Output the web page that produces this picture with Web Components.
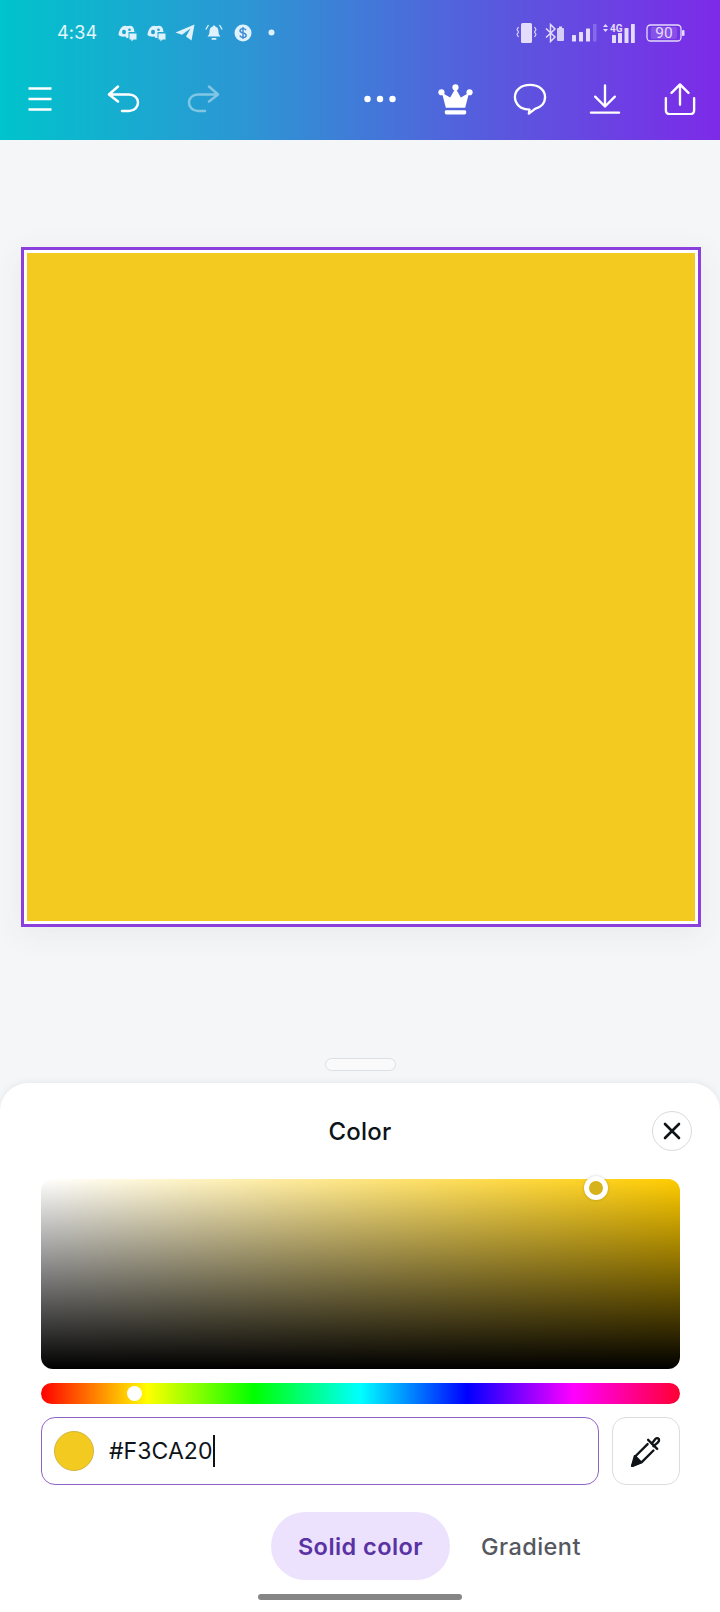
<!DOCTYPE html>
<html>
<head>
<meta charset="utf-8">
<title>Color</title>
<style>
  html, body { margin: 0; padding: 0; background: #f5f6f8; }
  body { width: 720px; height: 1612px; overflow: hidden; font-family: Inter, "Liberation Sans", sans-serif; }
</style>
</head>
<body>
  <app-header>
    <status-bar></status-bar>
    <editor-toolbar></editor-toolbar>
  </app-header>
  <design-workspace color="#f3ca1f"></design-workspace>
  <color-sheet title="Color">
    <sv-picker></sv-picker>
    <hue-slider></hue-slider>
    <hex-field value="#F3CA20"></hex-field>
    <tab-switch></tab-switch>
  </color-sheet>

<script>
class AppHeader extends HTMLElement {
  constructor() {
    super();
    this.attachShadow({ mode: 'open' });
    this.shadowRoot.innerHTML = `
      <style>
        :host {
          display: block;
          height: 140px;
          background: linear-gradient(90deg, #00c4cc 0%, #2f93d4 36%, #5a57de 70%, #7d2ae8 100%);
        }
      </style>
      <slot></slot>
    `;
  }
}

// Chat-game notification glyph, used twice in the status bar
const chatGlyph = (eye, style = '') => `
  <svg style="${style}" width="19" height="18" viewBox="0 0 19 18" fill="currentColor">
    <path d="M4.500 2.500c1.500-.8 2.500-1 3.500-.5h3c1-.5 2-.3 3.500.5 1 1 1.700 2.800 2 5.500H10.500v6H8.500l-1-1.500C4.500 13 2 12.300.5 11 .5 8 2 4.500 4.500 2.500z"/>
    <ellipse cx="6" cy="8" rx="2" ry="2.200" fill="${eye}"/>
    <circle cx="11.500" cy="5.800" r="1.300" fill="${eye}"/>
    <path d="M11.500 9.500h7v6h-3L13.500 17.500v-2h-2z"/>
  </svg>`;

class StatusBar extends HTMLElement {
  constructor() {
    super();
    this.attachShadow({ mode: 'open' });
    this.shadowRoot.innerHTML = `
      <style>
        :host {
          display: flex;
          align-items: center;
          height: 55px;
          padding: 10px 0 0 57px;
          box-sizing: border-box;
          color: #e6f4fb;
        }
        svg { display: block; flex: none; }
        .time { font-size: 18px; font-weight: 400; width: 61px; letter-spacing: .2px; color: #e4f6fb; }
        .left { display: flex; align-items: center; color: #dff1fb; }
        .right { display: flex; align-items: center; margin-left: 241px; color: #e4dcfb; }
        text { font-family: Roboto, "Liberation Sans", sans-serif; }
      </style>
      <span class="time">4:34</span>
      <div class="left">
        ${chatGlyph('#1aa6cf')}
        ${chatGlyph('#1fa0d0', 'margin-left:10px')}
        <svg style="margin-left:9px" width="20" height="17" viewBox="0 0 20 17" fill="currentColor"><path d="M.5 8.500 19.500.5 16.500 16.500 11 12.500 15.500 4.500 7 10.800z"/></svg>
        <svg style="margin-left:10px" width="18" height="18" viewBox="0 0 18 18" fill="currentColor"><path d="M9 1.500c.8 0 1.200.5 1.300 1.100C12.500 3.200 13.500 5 13.500 7.500c0 2.500.8 3.800 2 5H2.500c1.200-1.200 2-2.500 2-5 0-2.500 1-4.300 3.200-4.900C7.800 2 8.200 1.500 9 1.500z"/><rect x="6.500" y="14" width="5" height="1.800" rx=".9"/><path d="M3.500 1 .8 5.500M14.500 1l2.700 4.500" stroke="currentColor" stroke-width="1.300" fill="none"/></svg>
        <svg style="margin-left:11px" width="18" height="18" viewBox="0 0 18 18"><circle cx="9" cy="9" r="8.500" fill="currentColor"/><path d="M12 6.200C11.500 5 10.400 4.600 9 4.600c-1.700 0-3 .8-3 2.200 0 3 6.200 1.500 6.200 4.400 0 1.400-1.400 2.200-3.200 2.200-1.500 0-2.700-.6-3.200-1.900M9 3v12" fill="none" stroke="#3a8ad6" stroke-width="1.400"/></svg>
        <svg style="margin-left:16px" width="7" height="7" viewBox="0 0 7 7" fill="currentColor"><circle cx="3.500" cy="3.500" r="3"/></svg>
      </div>
      <div class="right">
        <svg width="21" height="20" viewBox="0 0 21 20" fill="currentColor"><rect x="5" y="0" width="11" height="20" rx="1.500"/><path d="M2.500 4 1 6.500l1.500 2.500L1 11.500 2.500 14M18.500 4 20 6.500 18.500 9l1.500 2.500L18.500 14" fill="none" stroke="currentColor" stroke-width="1.100"/></svg>
        <svg style="margin-left:8px" width="20" height="20" viewBox="0 0 20 20" fill="none" stroke="currentColor" stroke-width="1.500"><path d="M1 5.500 10 14 5.500 18.500V1.500L10 6 1 14.500"/><rect x="12" y="5" width="7" height="13" rx="1" fill="currentColor" stroke="none" opacity=".9"/><rect x="14" y="3.500" width="3" height="2" fill="currentColor" stroke="none"/></svg>
        <svg style="margin-left:7px" width="25" height="18" viewBox="0 0 25 18" fill="currentColor"><rect x="0" y="11" width="4" height="6.500" rx=".6"/><rect x="7" y="8" width="4" height="9.500" rx=".6"/><rect x="14" y="4.500" width="4" height="13" rx=".6"/><rect x="21" y="0" width="3.500" height="17.500" rx=".6" opacity=".25"/></svg>
        <svg style="margin-left:5px" width="33" height="20" viewBox="0 0 33 20" fill="currentColor"><path d="M3.500 1 6 4H1zM3.500 9 6 6H1z"/><text x="8" y="9" font-size="10" font-weight="700">4G</text><rect x="10" y="12" width="4" height="8" rx=".6"/><rect x="16" y="10" width="4" height="10" rx=".6"/><rect x="22.500" y="5" width="4" height="15" rx=".6"/><rect x="29" y="1" width="3.800" height="19" rx=".6"/></svg>
        <svg style="margin-left:11px" width="39" height="18" viewBox="0 0 39 18"><rect x="5" y="3" width="26" height="12" rx="2" fill="#fff" opacity=".14"/><rect x="1" y="1" width="34" height="16" rx="3.500" fill="none" stroke="currentColor" stroke-width="1.300"/><rect x="36" y="6" width="2.500" height="6" rx="1" fill="currentColor"/><text x="18" y="14.300" text-anchor="middle" font-size="15.500" fill="currentColor">90</text></svg>
      </div>
    `;
  }
}

class EditorToolbar extends HTMLElement {
  constructor() {
    super();
    this.attachShadow({ mode: 'open' });
    this.shadowRoot.innerHTML = `
      <style>
        :host {
          display: flex;
          justify-content: space-between;
          align-items: center;
          height: 85px;
          padding: 3px 18px 0 18px;
          box-sizing: border-box;
          color: #fff;
        }
        .group { display: flex; align-items: center; }
        .right { gap: 31px; }
        button {
          all: unset;
          display: flex;
          align-items: center;
          justify-content: center;
          width: 44px;
          height: 44px;
        }
        svg { display: block; fill: none; stroke: currentColor; stroke-width: 2.500; stroke-linecap: round; stroke-linejoin: round; }
        .off { opacity: .42; margin-left: 35px; }
        .undo { margin-left: 40px; }
      </style>
      <div class="group left">
        <button aria-label="Menu"><svg width="26" height="26" viewBox="0 0 26 26"><path stroke-linecap="butt" d="M1.500 2.500h23M1.500 13h23M1.500 23.500h23"/></svg></button>
        <button aria-label="Undo" class="undo"><svg width="34" height="28" viewBox="0 0 34 28"><path d="M11 1.500 2 9.500l9 7M2.500 9.500H22c5.500 0 9 3.500 9 8s-3.500 8.500-9 8.500h-7"/></svg></button>
        <button aria-label="Redo" class="off"><svg width="34" height="28" viewBox="0 0 34 28"><path d="M23 1.500l9 8-9 7M31.500 9.500H12c-5.500 0-9 3.500-9 8s3.500 8.500 9 8.500h7"/></svg></button>
      </div>
      <div class="group right">
        <button aria-label="More"><svg width="32" height="8" viewBox="0 0 32 8" style="fill:currentColor;stroke:none"><circle cx="3.500" cy="4" r="3.200"/><circle cx="16" cy="4" r="3.200"/><circle cx="28.500" cy="4" r="3.200"/></svg></button>
        <button aria-label="Premium"><svg width="35" height="31" viewBox="0 0 36 32" style="fill:currentColor;stroke:none"><circle cx="18" cy="3.500" r="3.200"/><circle cx="3.500" cy="8.500" r="3.200"/><circle cx="32.500" cy="8.500" r="3.200"/><path d="M18 4.500l5.500 9.500 8.500-5-4 15.500H8L4 9l8.500 5z"/><rect x="7" y="27" width="22" height="4.500" rx="1.500"/></svg></button>
        <button aria-label="Comment"><svg width="34" height="32" viewBox="0 0 36 34"><path d="M18 2C8.500 2 2 7.500 2 15s6.500 13 13.500 13c1 0 1.500 0 2 .2l-.7 4.300 6.500-5C29.500 26 34 21.500 34 15 34 7.500 27.500 2 18 2z"/></svg></button>
        <button aria-label="Download"><svg width="32" height="30" viewBox="0 0 34 32"><path d="M17 1.500v22M6.500 13.500 17 24l10.500-10.500M2 30.500h30"/></svg></button>
        <button aria-label="Share"><svg width="32" height="32" viewBox="0 0 34 34"><path d="M17 23V2M8 10.500 17 1.500l9 9M2 16v13c0 2.500 1.500 4 4 4h22c2.500 0 4-1.500 4-4V16"/></svg></button>
      </div>
    `;
  }
}

class DesignWorkspace extends HTMLElement {
  constructor() {
    super();
    this.attachShadow({ mode: 'open' });
  }

  connectedCallback() {
    const color = this.getAttribute('color');
    this.shadowRoot.innerHTML = `
      <style>
        :host {
          display: flex;
          flex-direction: column;
          align-items: center;
          height: 943px;
          padding-top: 107px;
          box-sizing: border-box;
          background: #f5f6f8;
        }
        .page {
          width: 680px;
          height: 680px;
          margin-left: 1px;
          flex: none;
          box-sizing: border-box;
          border: 3px solid #8b3fdc;
          padding: 3px;
          background: #fff;
          box-shadow: 0 6px 30px rgba(60, 66, 87, .07);
        }
        .fill { width: 100%; height: 100%; background: ${color}; }
        .handle {
          flex: none;
          width: 71px;
          height: 13px;
          margin-top: 131px;
          box-sizing: border-box;
          border: 1.500px solid #dcdfe4;
          border-radius: 7px;
          background: #fafafa;
        }
      </style>
      <div class="page"><div class="fill"></div></div>
      <div class="handle"></div>
    `;
  }
}

class ColorSheet extends HTMLElement {
  constructor() {
    super();
    this.attachShadow({ mode: 'open' });
  }

  connectedCallback() {
    this.shadowRoot.innerHTML = `
      <style>
        :host {
          display: block;
          position: relative;
          height: 529px;
          box-sizing: border-box;
          background: #fff;
          border-radius: 28px 28px 0 0;
          box-shadow: 0 -1px 6px rgba(60, 66, 87, .08);
        }
        header {
          display: grid;
          grid-template-columns: 1fr auto 1fr;
          align-items: center;
          height: 40px;
          padding: 28px 27px 28px;
        }
        h2 { grid-column: 2; margin: 0; font-size: 24px; font-weight: 500; letter-spacing: .25px; color: #0e1318; }
        button {
          all: unset;
          grid-column: 3;
          justify-self: end;
          display: flex;
          align-items: center;
          justify-content: center;
          width: 40px;
          height: 40px;
          margin-right: 1px;
          box-sizing: border-box;
          border: 1px solid #d9dadd;
          border-radius: 50%;
        }
        .body { display: flex; flex-direction: column; padding: 0 40px 0 41px; }
        .bar {
          position: absolute;
          left: 258px;
          bottom: 12px;
          width: 204px;
          height: 6px;
          border-radius: 3px;
          background: #858585;
        }
      </style>
      <header>
        <h2>${this.getAttribute('title')}</h2>
        <button aria-label="Close">
          <svg width="18" height="18" viewBox="0 0 18 18" fill="none" stroke="#0e1318" stroke-width="2.600" stroke-linecap="round"><path d="M2 2l14 14M16 2 2 16"/></svg>
        </button>
      </header>
      <div class="body"><slot></slot></div>
      <div class="bar"></div>
    `;
  }
}

class SvPicker extends HTMLElement {
  constructor() {
    super();
    this.attachShadow({ mode: 'open' });
    this.shadowRoot.innerHTML = `
      <style>
        :host {
          display: block;
          position: relative;
          height: 190px;
          border-radius: 12px;
          background:
            linear-gradient(to top, #000, rgba(0, 0, 0, 0)),
            linear-gradient(to right, #fff, #ffcc00);
        }
        .knob {
          position: absolute;
          left: 543px;
          top: -3px;
          width: 24px;
          height: 24px;
          box-sizing: border-box;
          border: 5px solid #fff;
          border-radius: 50%;
          background: #d6b21c;
          box-shadow: 0 0 3px rgba(0, 0, 0, .2);
        }
      </style>
      <div class="knob"></div>
    `;
  }
}

class HueSlider extends HTMLElement {
  constructor() {
    super();
    this.attachShadow({ mode: 'open' });
    this.shadowRoot.innerHTML = `
      <style>
        :host {
          display: block;
          position: relative;
          height: 21px;
          margin-top: 14px;
          border-radius: 11px;
          background: linear-gradient(to right, #f00 0%, #ff0 16.67%, #0f0 33.33%, #0ff 50%, #00f 66.67%, #f0f 83.33%, #f03 100%);
        }
        .knob {
          position: absolute;
          left: 86px;
          top: 3px;
          width: 15px;
          height: 15px;
          border-radius: 50%;
          background: #fff;
        }
      </style>
      <div class="knob"></div>
    `;
  }
}

class HexField extends HTMLElement {
  constructor() {
    super();
    this.attachShadow({ mode: 'open' });
  }

  connectedCallback() {
    this.shadowRoot.innerHTML = `
      <style>
        :host {
          display: flex;
          gap: 13px;
          height: 68px;
          margin-top: 13px;
        }
        .field {
          flex: 1;
          display: flex;
          align-items: center;
          box-sizing: border-box;
          padding-left: 12px;
          border: 1px solid #8f62c6;
          border-radius: 14px;
        }
        .swatch {
          width: 40px;
          height: 40px;
          box-sizing: border-box;
          border: 1px solid #d4b53e;
          border-radius: 50%;
          background: #f3ca20;
        }
        .value { margin-left: 15px; font-size: 23px; font-weight: 400; color: #0e1318; letter-spacing: .05px; }
        .caret { width: 2px; height: 32px; margin-left: 1px; background: #0e1318; }
        .drop {
          flex: none;
          display: flex;
          align-items: center;
          justify-content: center;
          width: 68px;
          box-sizing: border-box;
          border: 1px solid #dcdde0;
          border-radius: 14px;
        }
      </style>
      <div class="field">
        <div class="swatch"></div>
        <span class="value">${this.getAttribute('value')}</span>
        <div class="caret"></div>
      </div>
      <div class="drop">
        <svg width="34" height="34" viewBox="0 0 32 32" fill="none" stroke="#0e1318" stroke-width="2.200" stroke-linecap="round" stroke-linejoin="round">
          <path d="M18 5.500 26.500 14"/>
          <path d="M21.500 9l3.500-4.500c1.500-1.500 3.500 0 3.300 1.500-.1 1-.8 1.500-1.800 2.500L23 11.500"/>
          <path d="M17.500 9.500 6.500 20.500 3 30l9-3.500 11-11"/>
          <path d="M3 30l2.500-9.200 5.800 5.800z" fill="#0e1318"/>
        </svg>
      </div>
    `;
  }
}

class TabSwitch extends HTMLElement {
  constructor() {
    super();
    this.attachShadow({ mode: 'open' });
    this.shadowRoot.innerHTML = `
      <style>
        :host {
          display: flex;
          align-items: center;
          height: 68px;
          margin-top: 27px;
          padding-left: 230px;
          font-size: 23.500px;
          font-weight: 600;
          letter-spacing: .45px;
        }
        .tab { display: flex; align-items: center; height: 68px; box-sizing: border-box; border-radius: 34px; }
        .active { width: 179px; justify-content: center; background: #ece2fd; color: #5a32a3; }
        .idle { margin-left: 31px; color: #55585e; font-weight: 500; }
      </style>
      <div class="tab active">Solid color</div>
      <div class="tab idle">Gradient</div>
    `;
  }
}

customElements.define('app-header', AppHeader);
customElements.define('status-bar', StatusBar);
customElements.define('editor-toolbar', EditorToolbar);
customElements.define('design-workspace', DesignWorkspace);
customElements.define('color-sheet', ColorSheet);
customElements.define('sv-picker', SvPicker);
customElements.define('hue-slider', HueSlider);
customElements.define('hex-field', HexField);
customElements.define('tab-switch', TabSwitch);
</script>
</body>
</html>
